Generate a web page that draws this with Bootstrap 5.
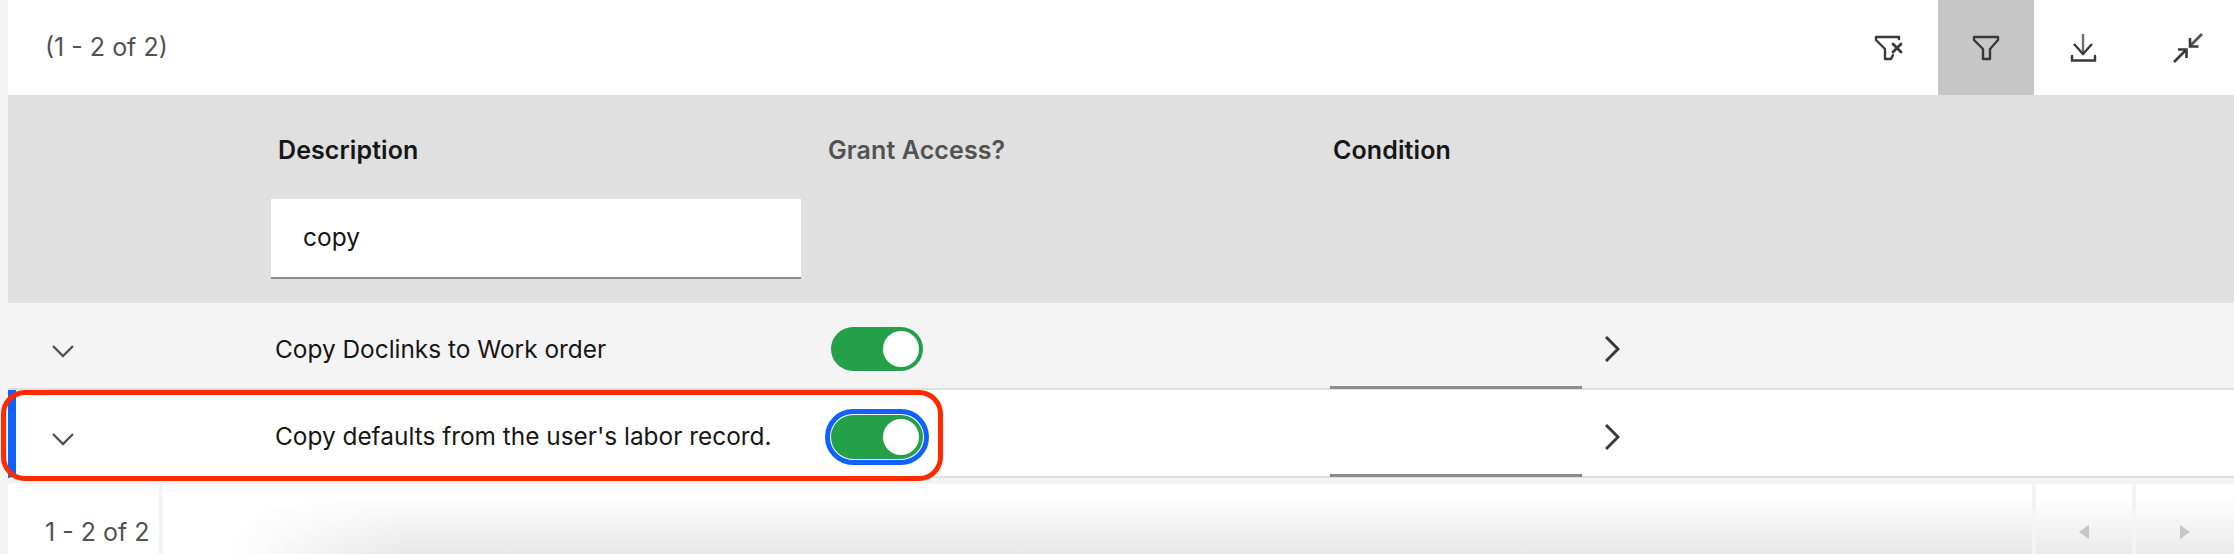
<!DOCTYPE html>
<html lang="en">
<head>
  <meta charset="UTF-8">
  <meta name="viewport" content="width=device-width, initial-scale=1.0">
  <title>Security group options</title>
  <link href="https://cdn.jsdelivr.net/npm/bootstrap@5.3.3/dist/css/bootstrap.min.css" rel="stylesheet">
  <script src="https://cdn.jsdelivr.net/npm/bootstrap@5.3.3/dist/js/bootstrap.bundle.min.js"></script>
  <style>
    html, body { height: 554px; overflow: hidden; }
    body { background: #f4f4f4; font-family: Inter, "Liberation Sans", sans-serif; color: #161616; padding-left: 8px; }

    .tbl-toolbar { height: 95px; background: #fff; }
    .tbl-count { padding-left: 37px; font-size: 25px; color: #525252; }
    .tool-btn { width: 96px; height: 95px; border: 0; background: transparent; padding: 0; }
    .tool-btn.is-on { background: #c6c6c6; }
    .tool-btn.is-wide { width: 100px; }
    .tool-btn.is-last { width: 100px; padding-left: 8px; }
    .tool-btn svg { display: block; margin: 0 auto; }

    .tbl-head { height: 208px; background: #e0e0e0; }
    .col-exp { width: 263px; flex: none; }
    .col-desc { width: 557px; flex: none; }
    .col-grant { width: 502px; flex: none; }
    .col-cond { width: 252px; flex: none; }
    .head-label { font-size: 25px; font-weight: 600; margin-top: 40px; line-height: 30px; letter-spacing: .1px; }
    .col-desc .head-label { padding-left: 7px; }
    .col-cond .head-label { padding-left: 3px; }
    .head-label.is-dim { color: #525252; }
    .filter-input { display: block; width: 530px; height: 80px; margin-top: 34px; padding: 0 32px 3px; border: 0; border-bottom: 2px solid #8d8d8d; border-radius: 0; font-size: 24.5px; color: #161616; background: #fff; }

    .tbl-row { height: 87px; padding-top: 7px; border-bottom: 2px solid #e0e0e0; background: #f4f4f4; font-size: 24.4px; }
    .tbl-row .col-desc { padding-left: 4px; }
    .tbl-row.is-current { background: #fff; border-left: 8px solid #0f62fe; height: 88px; }
    .tbl-row.is-current .col-exp { width: 255px; }
    .row-chev { width: 24px; margin-left: 43px; color: #525252; }
    .is-current .row-chev { margin-left: 35px; }
    .row-toggle { width: 92px; height: 44px; border-radius: 22px; background: #24a148; position: relative; margin-left: 3px; }
    .row-toggle::after { content: ""; position: absolute; top: 4px; right: 4px; width: 36px; height: 36px; border-radius: 50%; background: #fff; }
    .row-toggle.is-focus { outline: 5px solid #0f62fe; outline-offset: 1px; }
    .cond-cell { height: 100%; border-bottom: 3px solid #8d8d8d; margin-bottom: -1px; }
    .row-next { margin-left: 23px; color: #393939; }

    .tbl-foot { height: 70px; margin-top: 6px; gap: 4px; background: #f4f4f4; }
    .foot-cell { background: linear-gradient(to right, #fff 60px, rgba(255,255,255,0) 240px), linear-gradient(#fff 10px, #e8e8e8 100%); }
    .foot-range { width: 151px; background: #fff; padding: 0 0 3px 37px; font-size: 25px; color: #525252; }
    .foot-arrow { width: 96px; padding-bottom: 15px; color: #c6c6c6; background: linear-gradient(#fff 10px, #ebebeb 100%); }
    .foot-arrow.is-last { width: 98px; }

    .hilite { position: absolute; left: 1px; top: 390px; width: 942px; height: 91px; border: 5px solid #ff2a00; border-radius: 24px; pointer-events: none; }
  </style>
</head>
<body>
  <div class="tbl-toolbar d-flex align-items-center justify-content-between">
    <div class="tbl-count">(1 - 2 of 2)</div>
    <div class="d-flex">
      <button class="tool-btn" type="button" aria-label="Clear filters">
        <svg width="32" height="28" viewBox="0 0 32 28" fill="none" stroke="#393939" stroke-width="2.4" stroke-linejoin="round" stroke-linecap="round"><path d="M25 5V3H2v3l9 9v10h6l2-4"/><path d="M19 10l8 8M27 10l-8 8" stroke-width="2.8"/></svg>
      </button>
      <button class="tool-btn is-on" type="button" aria-label="Filter">
        <svg width="28" height="28" viewBox="0 0 28 28" fill="none" stroke="#393939" stroke-width="2.4" stroke-linejoin="round"><path d="M2 3h24v3l-8 9v10h-7V15L2 6z"/></svg>
      </button>
      <button class="tool-btn is-wide" type="button" aria-label="Download">
        <svg width="28" height="30" viewBox="0 0 28 30" fill="none" stroke="#393939" stroke-width="2.4"><path d="M13 1v20" stroke="#6f6f6f"/><path d="M4 11l9 10 9-10"/><path d="M2 23v4.500h23V23" stroke-linecap="round"/></svg>
      </button>
      <button class="tool-btn is-last" type="button" aria-label="Collapse">
        <svg width="30" height="30" viewBox="0 0 30 30" fill="none" stroke="#393939" stroke-width="2.6"><path d="M29 1L17 13" stroke="#525252"/><path d="M17 5v8.500h8.500M1 29l12-12" /><path d="M5 16.500h8.500V25"/></svg>
      </button>
    </div>
  </div>

  <div class="tbl-head d-flex">
    <div class="col-exp"></div>
    <div class="col-desc">
      <div class="head-label">Description</div>
      <input class="filter-input" type="text" value="copy" aria-label="Filter description">
    </div>
    <div class="col-grant"><div class="head-label is-dim">Grant Access?</div></div>
    <div class="col-cond"><div class="head-label">Condition</div></div>
  </div>

  <div class="tbl-row d-flex align-items-center">
    <div class="col-exp">
      <svg class="row-chev d-block" viewBox="0 0 24 24" fill="none" stroke="currentColor" stroke-width="2.4"><path d="M2 9l10 10L22 9"/></svg>
    </div>
    <div class="col-desc">Copy Doclinks to Work order</div>
    <div class="col-grant"><div class="row-toggle"></div></div>
    <div class="col-cond cond-cell"></div>
    <svg class="row-next" width="15" height="26" viewBox="0 0 15 26" fill="none" stroke="currentColor" stroke-width="3"><path d="M1 1l12 12L1 25"/></svg>
  </div>

  <div class="tbl-row is-current d-flex align-items-center">
    <div class="col-exp">
      <svg class="row-chev d-block" viewBox="0 0 24 24" fill="none" stroke="currentColor" stroke-width="2.4"><path d="M2 9l10 10L22 9"/></svg>
    </div>
    <div class="col-desc">Copy defaults from the user's labor record.</div>
    <div class="col-grant"><div class="row-toggle is-focus"></div></div>
    <div class="col-cond cond-cell"></div>
    <svg class="row-next" width="15" height="26" viewBox="0 0 15 26" fill="none" stroke="currentColor" stroke-width="3"><path d="M1 1l12 12L1 25"/></svg>
  </div>

  <div class="tbl-foot d-flex">
    <div class="foot-range d-flex align-items-end">1 - 2 of 2</div>
    <div class="foot-cell flex-grow-1"></div>
    <div class="foot-arrow d-flex align-items-end justify-content-center"><svg width="12" height="14" viewBox="0 0 12 14" fill="currentColor"><path d="M11 0v14L1 7z"/></svg></div>
    <div class="foot-arrow is-last d-flex align-items-end justify-content-center"><svg width="12" height="14" viewBox="0 0 12 14" fill="currentColor"><path d="M1 0v14l10-7z"/></svg></div>
  </div>

  <div class="hilite"></div>
</body>
</html>
